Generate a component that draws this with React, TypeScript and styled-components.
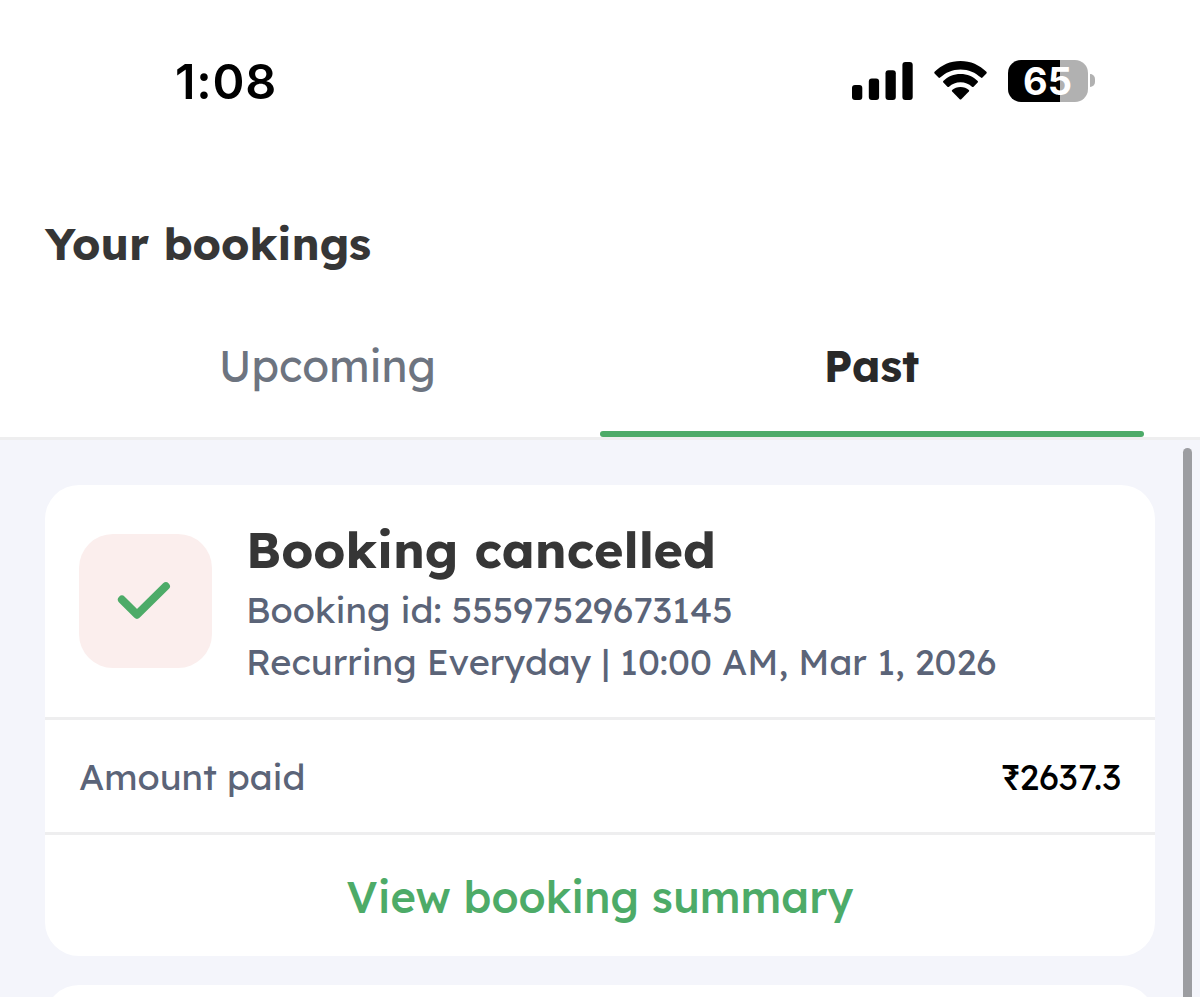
import { useState } from "react";
import styled, { createGlobalStyle } from "styled-components";

interface IBookingModel {
    id: string;
    title: string;
    schedule: string;
    amount: string;
}

const bookings: IBookingModel[] = [
    {
        id: "55597529673145",
        title: "Booking cancelled",
        schedule: "Recurring Everyday | 10:00 AM, Mar 1, 2026",
        amount: "₹2637.3",
    },
];

const tabs = ["Upcoming", "Past"];

const GlobalStyle = createGlobalStyle`
    * {
        box-sizing: border-box;
    }
    body {
        margin: 0;
        background: #fff;
        font-family: Lexend, Inter, sans-serif;
        font-feature-settings: "cv11";
    }
    button {
        padding: 0;
        border: none;
        background: none;
        font-family: inherit;
        cursor: pointer;
    }
`;

const Screen = styled.div`
    position: relative;
    display: flex;
    flex-direction: column;
    width: 1200px;
    height: 997px;
    overflow: hidden;
`;

const StatusBar = styled.header`
    display: flex;
    flex-shrink: 0;
    justify-content: space-between;
    align-items: center;
    height: 164px;
    padding: 0 105px 0 175px;
    font-family: Inter, "Liberation Sans", sans-serif;
`;

const Clock = styled.span`
    font-size: 48.5px;
    font-weight: 600;
    letter-spacing: 0.8px;
    line-height: 58px;
    color: #000;
`;

const StatusIcons = styled.div`
    display: flex;
    align-items: center;
    height: 42px;
    margin-bottom: 3px;
`;

const SignalIcon = styled.svg`
    width: 61px;
    height: 42px;
    margin-right: 21px;
`;

const WifiIcon = styled.svg`
    width: 53px;
    height: 42px;
    margin-right: 21px;
`;

const Battery = styled.div<{ $level: number }>`
    display: flex;
    align-items: center;
    justify-content: center;
    width: 80px;
    height: 42px;
    padding-right: 1px;
    border-radius: 13px;
    background: linear-gradient(to right, #000 ${(p) => p.$level}%, #b1b1b1 ${(p) => p.$level}%);
    color: #fff;
    font-size: 38px;
    font-weight: 700;
    line-height: 42px;
`;

const BatteryCap = styled.div`
    width: 5px;
    height: 13px;
    margin-left: 2px;
    border-radius: 0 5px 5px 0;
    background: #b1b1b1;
`;

const PageTitle = styled.h1`
    flex-shrink: 0;
    margin: 0;
    padding: 52px 45px 21px;
    font-size: 44.4px;
    font-weight: 700;
    line-height: 56px;
    color: #363636;
`;

const TabBar = styled.nav`
    display: flex;
    flex-shrink: 0;
    height: 147px;
    padding: 0 56px;
    border-bottom: 3px solid #eeeeef;
`;

const Tab = styled.button<{ $active: boolean }>`
    position: relative;
    flex: 1;
    padding: 1px 1px 0 0;
    font-size: ${(p) => (p.$active ? "43.4px" : "43.7px")};
    font-weight: ${(p) => (p.$active ? 700 : 400)};
    line-height: 56px;
    color: ${(p) => (p.$active ? "#292929" : "#6d7480")};

    &::after {
        content: "";
        display: ${(p) => (p.$active ? "block" : "none")};
        position: absolute;
        left: 0;
        right: 0;
        bottom: 0;
        height: 6px;
        border-radius: 3px;
        background: #4dab68;
    }
`;

const BookingList = styled.main`
    display: flex;
    flex-direction: column;
    flex: 1;
    min-height: 0;
    gap: 29px;
    padding: 45px 45px 0;
    background: #f4f5fb;
`;

const Card = styled.article`
    flex-shrink: 0;
    min-height: 120px;
    border-radius: 34px;
    background: #fff;
`;

const CardHead = styled.div`
    display: flex;
    align-items: center;
    gap: 34px;
    height: 232px;
    padding: 0 34px;
`;

const StatusTile = styled.div`
    display: flex;
    align-items: center;
    justify-content: center;
    width: 133px;
    height: 134px;
    padding-right: 4px;
    border-radius: 34px;
    background: #fbeeed;
`;

const CheckIcon = styled.svg`
    width: 54px;
    height: 40px;
`;

const BookingInfo = styled.div`
    padding-top: 2px;
`;

const BookingTitle = styled.h2`
    margin: 0 0 2px;
    font-size: 50.2px;
    font-weight: 700;
    line-height: 65px;
    color: #363636;
`;

const BookingMeta = styled.p`
    margin: 0;
    font-size: 36.12px;
    line-height: 51.5px;
    white-space: nowrap;
    color: #5b6478;
`;

const AmountRow = styled.div`
    display: flex;
    align-items: center;
    justify-content: space-between;
    height: 115px;
    padding: 0 34px;
    border-top: 3px solid #eeeeef;
    font-size: 36.1px;
    line-height: 45px;
    color: #5b6478;
`;

const Amount = styled.span`
    font-size: 35.6px;
    font-weight: 450;
    color: #000;
`;

const SummaryButton = styled.button`
    display: block;
    width: 100%;
    height: 124px;
    padding-top: 1px;
    border-top: 3px solid #eeeeef;
    font-size: 43.5px;
    font-weight: 500;
    color: #4dab68;
`;

const Scrollbar = styled.div`
    position: absolute;
    top: 448px;
    right: 8px;
    width: 9px;
    height: 700px;
    border-radius: 5px;
    background: #9c9da1;
`;

function PhoneStatus() {
    return (
        <StatusBar>
            <Clock>1:08</Clock>
            <StatusIcons>
                <SignalIcon viewBox="0 0 61 42">
                    <rect x="0" y="25" width="10.3" height="15" rx="3" />
                    <rect x="16.8" y="18.5" width="10.3" height="21.5" rx="3" />
                    <rect x="33.5" y="10.3" width="10.3" height="29.7" rx="3" />
                    <rect x="50.4" y="2" width="10.3" height="38" rx="3" />
                </SignalIcon>
                <WifiIcon viewBox="0 0 54 42" preserveAspectRatio="none">
                    <path d="M27 1C16.8 1 7.5 5 0.6 11.8Q-0.1 12.6 0.6 13.4L4.6 17.6Q5.4 18.3 6.2 17.6C11.7 12.5 18.8 9.4 27 9.4S42.3 12.5 47.8 17.6Q48.6 18.3 49.4 17.6L53.4 13.4Q54.1 12.6 53.4 11.8C46.5 5 37.2 1 27 1Z" />
                    <path d="M27 13.9C20.2 13.9 14 16.5 9.5 20.9Q8.8 21.7 9.5 22.5L13.7 26.8Q14.5 27.4 15.3 26.7C18.5 23.9 22.4 22.2 27 22.2S35.5 23.9 38.7 26.7Q39.5 27.4 40.3 26.8L44.5 22.5Q45.2 21.7 44.5 20.9C40 16.5 33.8 13.9 27 13.9Z" />
                    <path d="M27 26.9C23.7 26.9 20.7 28 18.5 30Q17.7 30.8 18.5 31.6L26.2 39.2Q27 39.9 27.8 39.2L35.5 31.6Q36.3 30.8 35.5 30C33.3 28 30.3 26.9 27 26.9Z" />
                </WifiIcon>
                <Battery $level={65}>65</Battery>
                <BatteryCap />
            </StatusIcons>
        </StatusBar>
    );
}

function BookingCard({ booking }: { booking: IBookingModel }) {
    return (
        <Card>
            <CardHead>
                <StatusTile>
                    <CheckIcon viewBox="0 0 54 40" fill="none" stroke="#4dab68" strokeWidth="8" strokeLinecap="round" strokeLinejoin="round">
                        <path d="M4.9 18.6L20 33.7L48.9 5.2" />
                    </CheckIcon>
                </StatusTile>
                <BookingInfo>
                    <BookingTitle>{booking.title}</BookingTitle>
                    <BookingMeta>Booking id: {booking.id}</BookingMeta>
                    <BookingMeta>{booking.schedule}</BookingMeta>
                </BookingInfo>
            </CardHead>
            <AmountRow>
                <span>Amount paid</span>
                <Amount>{booking.amount}</Amount>
            </AmountRow>
            <SummaryButton type="button">View booking summary</SummaryButton>
        </Card>
    );
}

export default function App() {
    const [activeTab, setActiveTab] = useState<string>("Past");

    return (
        <>
            <GlobalStyle />
            <Screen>
                <PhoneStatus />
                <PageTitle>Your bookings</PageTitle>
                <TabBar>
                    {tabs.map((tab) => (
                        <Tab key={tab} $active={tab === activeTab} onClick={() => setActiveTab(tab)}>
                            {tab}
                        </Tab>
                    ))}
                </TabBar>
                <BookingList>
                    {bookings.map((b) => (
                        <BookingCard key={b.id} booking={b} />
                    ))}
                    {/* next card, only its top edge is on screen */}
                    <Card />
                </BookingList>
                <Scrollbar />
            </Screen>
        </>
    );
}
